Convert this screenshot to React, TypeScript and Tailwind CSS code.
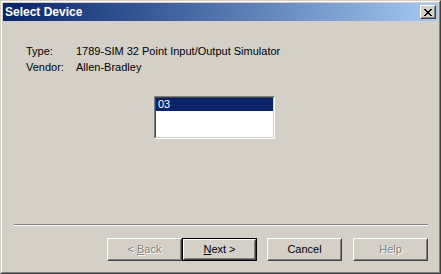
const face = "bg-[#d4d0c8]";

function Button({
  children,
  disabled,
  isDefault,
  className = "",
}: {
  children: React.ReactNode;
  disabled?: boolean;
  isDefault?: boolean;
  className?: string;
}) {
  const bevel = (
    <div className="w-full h-full border border-t-white border-l-white border-r-[#404040] border-b-[#404040]">
      <div className="w-full h-full border border-t-[#d4d0c8] border-l-[#d4d0c8] border-r-[#808080] border-b-[#808080] flex items-center justify-center">
        {disabled ? (
          <span className="text-[#808080] [text-shadow:1px_1px_0_#ffffff]">{children}</span>
        ) : (
          <span className="text-black">{children}</span>
        )}
      </div>
    </div>
  );
  return (
    <div className={`w-[75px] h-[23px] ${face} ${className}`}>
      {isDefault ? <div className="w-full h-full border border-black">{bevel}</div> : bevel}
    </div>
  );
}

export default function App() {
  return (
    <div
      className={`w-[441px] h-[274px] ${face} border border-t-[#d4d0c8] border-l-[#d4d0c8] border-r-[#404040] border-b-[#404040] text-[11px] leading-[13px] text-black`}
      style={{ fontFamily: '"Liberation Sans", Arial, sans-serif' }}
    >
      <div className="w-full h-full border border-t-white border-l-white border-r-[#808080] border-b-[#808080] p-px flex flex-col">
        {/* title bar */}
        <div className="h-[18px] shrink-0 bg-linear-to-r from-[#0a246a] to-[#a6caf0] flex items-center justify-between pl-[2px] pr-[2px]">
          <span className="text-white font-bold text-[12px] leading-[18px]">Select Device</span>
          <div className="w-[16px] h-[14px] bg-[#d4d0c8] border border-t-white border-l-white border-r-[#404040] border-b-[#404040]">
            <div className="w-full h-full border border-t-[#d4d0c8] border-l-[#d4d0c8] border-r-[#808080] border-b-[#808080] flex items-center justify-center">
              <svg width="8" height="7" viewBox="0 0 8 7" shapeRendering="crispEdges">
                <path
                  d="M0 0h2v1h-2zM6 0h2v1h-2zM1 1h2v1h-2zM5 1h2v1h-2zM2 2h4v1h-4zM3 3h2v1h-2zM2 4h4v1h-4zM1 5h2v1h-2zM5 5h2v1h-2zM0 6h2v1h-2zM6 6h2v1h-2z"
                  fill="#000"
                />
              </svg>
            </div>
          </div>
        </div>

        {/* device info */}
        <div className="mt-[22px] ml-[23px] grid grid-cols-[50px_1fr] leading-[16px]">
          <span>Type:</span>
          <span>1789-SIM 32 Point Input/Output Simulator</span>
          <span>Vendor:</span>
          <span>Allen-Bradley</span>
        </div>

        {/* list */}
        <div className="mt-[21px] ml-[151px] w-[121px] h-[43px] border border-t-[#808080] border-l-[#808080] border-r-white border-b-white">
          <div className="w-full h-full bg-white border border-t-[#404040] border-l-[#404040] border-r-[#d4d0c8] border-b-[#d4d0c8]">
            <div className="h-[13px] bg-[#0a246a] text-white pl-[2px] leading-[13px]">03</div>
          </div>
        </div>

        {/* separator */}
        <div className="mt-[85px] ml-[11px] w-[414px] h-[2px] border-t border-t-[#808080] border-b border-b-white" />

        {/* buttons */}
        <div className="mt-[12px] ml-[104px] flex">
          <Button disabled>
            &lt; <span className="underline">B</span>ack
          </Button>
          <Button isDefault>
            <span className="underline">N</span>ext &gt;
          </Button>
          <Button className="ml-[10px]">Cancel</Button>
          <Button disabled className="ml-[11px]">
            Help
          </Button>
        </div>
      </div>
    </div>
  );
}
